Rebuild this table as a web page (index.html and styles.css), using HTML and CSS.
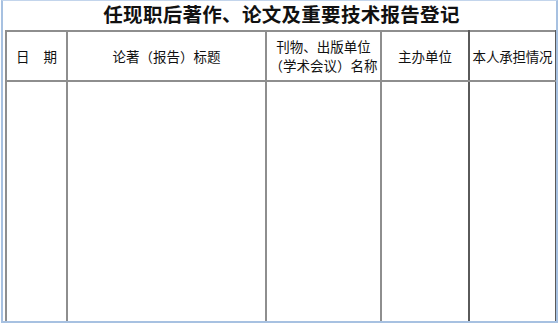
FILE: index.html
```html
<!DOCTYPE html>
<html lang="zh-CN">
<head>
<meta charset="utf-8">
<title>任现职后著作、论文及重要技术报告登记</title>
<link rel="stylesheet" href="styles.css">
</head>
<body>
<div class="frame">
  <h1 class="title">任现职后著作、论文及重要技术报告登记</h1>
  <table class="record">
    <colgroup>
      <col class="c-date">
      <col class="c-title">
      <col class="c-pub">
      <col class="c-org">
      <col class="c-role">
    </colgroup>
    <thead>
      <tr class="head-row">
        <th class="b-light"><span class="date-a">日</span><span class="date-b">期</span></th>
        <th class="b-light">论著（报告）标题</th>
        <th class="b-light pub">刊物、出版单位<br>（学术会议）名称</th>
        <th class="b-dark org">主办单位</th>
        <th class="b-dark role">本人承担情况</th>
      </tr>
    </thead>
    <tbody>
      <tr class="body-row">
        <td class="b-light"></td>
        <td class="b-light"></td>
        <td class="b-light"></td>
        <td class="b-dark"></td>
        <td class="b-dark"></td>
      </tr>
    </tbody>
  </table>
</div>
</body>
</html>
```
FILE: styles.css
```css
html, body {
  margin: 0;
  padding: 0;
  background: #ffffff;
}

.frame {
  box-sizing: border-box;
  width: 557px;
  height: 323px;
  margin-left: 1px;
  border: 2px solid #a7c1e1;
  border-top: 1px solid #c3d5ec;
  overflow: hidden;
  font-family: "Noto Sans CJK SC", "Noto Sans", sans-serif;
  color: #111;
}

.title {
  margin: 0;
  height: 29px;
  line-height: 25px;
  font-size: 19.5px;
  font-weight: bold;
  text-align: center;
  letter-spacing: 0.3px;
  padding-left: 4px;
}

.record {
  margin-left: 2px;
  width: 550px;
  border-collapse: collapse;
  table-layout: fixed;
  border-top: 2px solid #8e8e8e;
  border-left: 2px solid #8e8e8e;
}

.c-date { width: 61px; }
.c-title { width: 199px; }
.c-pub { width: 115px; }
.c-org { width: 88px; }
.c-role { width: 87px; }

.record th,
.record td {
  padding: 0;
  border-bottom: 2px solid #8e8e8e;
}

.b-light { border-right: 2px solid #8e8e8e; }
.b-dark { border-right: 2px solid #5a5a5a; }

.head-row { height: 50px; }

.record th {
  font-size: 13.5px;
  font-weight: normal;
  line-height: 19px;
  text-align: center;
  white-space: nowrap;
  overflow: visible;
}

.date-a { margin-right: 14px; }

.pub { text-align: right; padding-right: 0; }
.org { text-align: right; padding-right: 14px; }
.role { text-align: left; padding-left: 1px; letter-spacing: -0.2px; }

.body-row { height: 270px; }
```
